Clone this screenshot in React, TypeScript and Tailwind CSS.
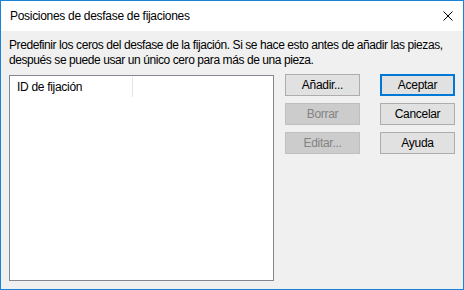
import React from 'react';

const font = { fontFamily: '"Liberation Sans", Arial, sans-serif' };

function Btn({ label, disabled, primary }: { label: string; disabled?: boolean; primary?: boolean }) {
  // Windows 10 style push button
  let cls = 'w-[75px] h-[22px] flex items-center justify-center text-[12px] tracking-[-0.3px] ';
  if (disabled) cls += 'border border-[#bfbfbf] bg-[#cccccc] text-[#838383]';
  else if (primary) cls += 'border-2 border-[#0078d7] bg-[#e1e1e1] text-black';
  else cls += 'border border-[#adadad] bg-[#e1e1e1] text-black';
  return <div className={cls}>{label}</div>;
}

export default function App() {
  return (
    <div className="w-[464px] h-[290px] border border-[#1883d7] flex flex-col bg-[#f0f0f0] text-black" style={font}>
      {/* Title bar */}
      <div className="h-[30px] bg-white flex items-center justify-between pl-[9px] pr-[10px]">
        <span className="text-[12px] leading-none tracking-[-0.3px]">Posiciones de desfase de fijaciones</span>
        <svg width="10" height="10" viewBox="0 0 10 10">
          <path d="M0.5 0.5L9.5 9.5M9.5 0.5L0.5 9.5" stroke="#000" strokeWidth="1" />
        </svg>
      </div>

      {/* Body */}
      <div className="flex-1 px-2">
        <p className="mt-[7px] text-[12px] leading-[15px] whitespace-nowrap tracking-[-0.42px]">
          Predefinir los ceros del desfase de la fijación. Si se hace esto antes de añadir las piezas,
          <br />
          después se puede usar un único cero para más de una pieza.
        </p>

        <div className="mt-[6px] flex items-start">
          {/* List view */}
          <div className="w-[266px] h-[206px] mt-px border border-[#828790] bg-white">
            <div className="flex h-[21px] items-center text-[12px] tracking-[-0.3px]">
              <div className="w-[123px] h-[20px] pl-[7px] flex items-center border-r border-[#e5e5e5]">ID de fijación</div>
            </div>
          </div>

          <div className="ml-[11px] flex flex-col gap-[7px]">
            <Btn label="Añadir..." />
            <Btn label="Borrar" disabled />
            <Btn label="Editar..." disabled />
          </div>

          <div className="ml-[20px] flex flex-col gap-[7px]">
            <Btn label="Aceptar" primary />
            <Btn label="Cancelar" />
            <Btn label="Ayuda" />
          </div>
        </div>
      </div>
    </div>
  );
}
